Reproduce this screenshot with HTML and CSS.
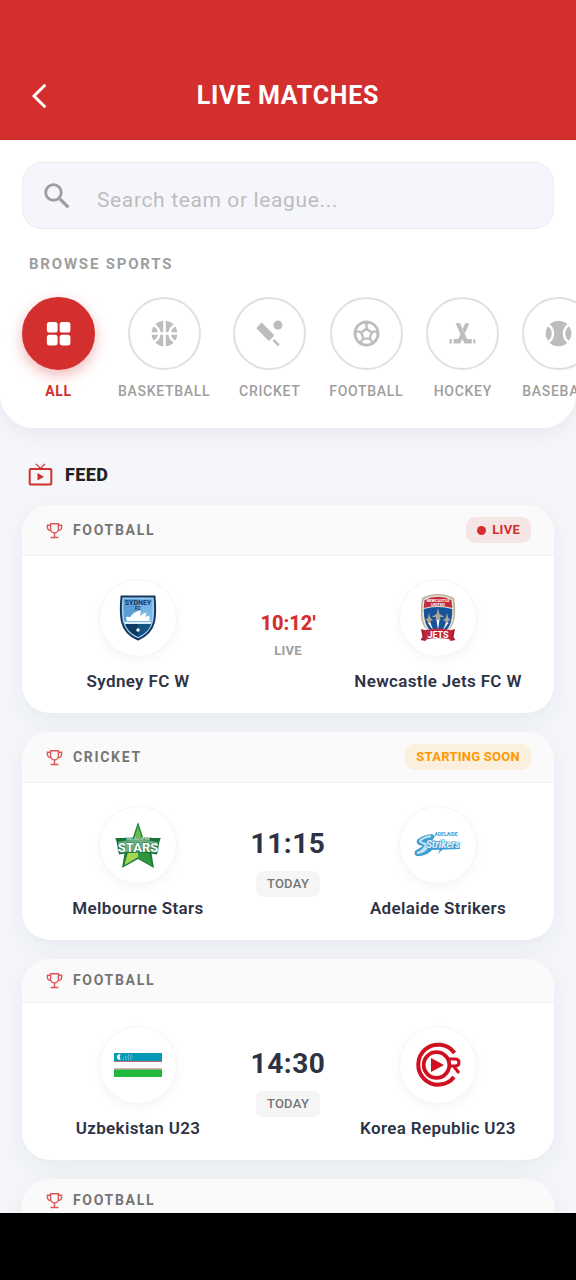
FILE: index.html
```html
<!DOCTYPE html>
<html lang="en">
<head>
<meta charset="UTF-8">
<meta name="viewport" content="width=device-width, initial-scale=1.0">
<title>Live Matches</title>
<link rel="stylesheet" href="styles.css">
</head>
<body>

<svg class="sprite" aria-hidden="true">
  <symbol id="trophy" viewBox="0 0 24 24">
    <path d="M6.500 2.500h11v7.500a5.500 5.500 0 0 1-11 0zM6.500 4.500H2v3.200a4.500 4.500 0 0 0 4.800 4.300M17.500 4.500H22v3.200a4.500 4.500 0 0 1-4.800 4.300M12 15.500v6M6.500 21.800h11" fill="none" stroke="currentColor" stroke-width="2"/>
  </symbol>
</svg>

<header class="app-bar">
  <button class="back" aria-label="Back">
    <svg viewBox="0 0 24 24"><path d="M16 3.500 7.500 12l8.500 8.500" fill="none" stroke="currentColor" stroke-width="2.200"/></svg>
  </button>
  <h1>LIVE MATCHES</h1>
</header>

<section class="panel">
  <div class="search">
    <label for="search" aria-label="Search">
      <svg viewBox="0 0 24 24"><circle cx="9.500" cy="9.500" r="5.500" fill="none" stroke="currentColor" stroke-width="2"/><path d="m14 14 6 6" stroke="currentColor" stroke-width="2.300"/></svg>
    </label>
    <input type="text" id="search" placeholder="Search team or league...">
  </div>

  <h2 class="panel-title">BROWSE SPORTS</h2>

  <nav class="sports">
    <button class="sport active">
      <span class="sport-icon">
        <svg viewBox="0 0 24 24" fill="currentColor"><rect x="3" y="3" width="8.300" height="8.300" rx="2"/><rect x="12.900" y="3" width="8.300" height="8.300" rx="2"/><rect x="3" y="12.900" width="8.300" height="8.300" rx="2"/><rect x="12.900" y="12.900" width="8.300" height="8.300" rx="2"/></svg>
      </span>
      ALL
    </button>
    <button class="sport">
      <span class="sport-icon">
        <svg viewBox="0 0 24 24" fill="currentColor"><path d="M17.090 11h4.860c-.16-1.610-.71-3.110-1.540-4.400-1.730.83-2.990 2.450-3.320 4.400zM6.910 11C6.580 9.050 5.320 7.430 3.590 6.600 2.760 7.890 2.210 9.390 2.050 11h4.860zM15.070 11c.32-2.590 1.880-4.790 4.060-6-1.600-1.630-3.740-2.710-6.130-2.950V11h2.070zM8.930 11H11V2.050C8.610 2.290 6.460 3.370 4.870 5c2.180 1.210 3.740 3.410 4.060 6zM15.070 13H13v8.950c2.390-.24 4.540-1.320 6.130-2.950-2.180-1.210-3.740-3.410-4.060-6zM3.590 17.400c1.730-.83 2.990-2.450 3.320-4.400H2.050c.16 1.610.71 3.110 1.540 4.400zM17.090 13c.33 1.950 1.590 3.570 3.320 4.400.83-1.290 1.380-2.790 1.540-4.400h-4.860zM8.930 13c-.32 2.590-1.880 4.790-4.060 6 1.600 1.630 3.740 2.710 6.130 2.950V13H8.930z"/></svg>
      </span>
      BASKETBALL
    </button>
    <button class="sport">
      <span class="sport-icon">
        <svg viewBox="0 0 24 24" fill="currentColor"><path d="M5.200 4.100q.7-.7 1.400 0l8.600 8.700q.7.7 0 1.400l-3 3q-.7.7-1.400 0L2.300 8.500q-.7-.7 0-1.400z"/><path d="m14.300 17.700 1.400-1.400 4.200 4.200-1.400 1.400z"/><circle cx="18.500" cy="5.500" r="3.500"/></svg>
      </span>
      CRICKET
    </button>
    <button class="sport">
      <span class="sport-icon">
        <svg viewBox="0 0 24 24" fill="none" stroke="currentColor" stroke-width="1.800"><circle cx="12" cy="12" r="9" stroke-width="2"/><path d="m12 8.300 4 2.900-1.500 4.700h-5L8 11.200z" stroke-linejoin="round"/><path d="M12 8.300V5.500M16 11.200l3-1M14.500 15.900l1.800 2.600M9.500 15.900l-1.800 2.600M8 11.200l-3-1"/><path d="M9 3.500 12 6l3-2.500zM20.800 8l-2.200 2.500 2 3.500zM3.200 8l2.200 2.500-2 3.500zM18.300 17.500l-2.800.5-.5 2.500zM5.700 17.500l2.800.5.5 2.500z" fill="currentColor" stroke="none"/></svg>
      </span>
      FOOTBALL
    </button>
    <button class="sport">
      <span class="sport-icon">
        <svg viewBox="0 0 24 24" fill="currentColor"><path d="M6.700 4H10l5.600 12.200h3.600v3.600h-5q-.7 0-1-.7z"/><path d="M17.300 4H14l-1.800 4.500 1.600 3.500zM10.600 12.200l1.500 3.500-1.600 3.500q-.3.600-1 .6H5.100v-3.600h3.600z"/><path d="M2 17.200q0-1 1-1h.7v3.600H2zM22 17.200q0-1-1-1h-.7v3.600H22z"/></svg>
      </span>
      HOCKEY
    </button>
    <button class="sport">
      <span class="sport-icon">
        <svg viewBox="0 0 24 24" fill="currentColor"><path d="M3.800 6.300A10 10 0 0 0 3.800 17.700 7 7 0 0 0 3.800 6.300zM20.200 6.300a10 10 0 0 1 0 11.400 7 7 0 0 1 0-11.400zM5.100 4.800a10 10 0 0 1 13.800 0 9 9 0 0 0 0 14.400 10 10 0 0 1-13.800 0 9 9 0 0 0 0-14.400z"/></svg>
      </span>
      BASEBALL
    </button>
  </nav>
</section>

<main class="feed">
  <h2 class="feed-title">
    <svg viewBox="0 0 24 24" fill="none" stroke="currentColor"><rect x="1.200" y="6" width="21.600" height="15.600" rx="1" stroke-width="2"/><path d="M7.500.8 12 5.500 16.500.8" stroke-width="1.200"/><path d="M9 10v7.500l6.500-3.750z" fill="currentColor" stroke="none"/></svg>
    FEED
  </h2>

  <article class="card">
    <div class="card-head">
      <svg class="trophy"><use href="#trophy"/></svg>
      <h3>FOOTBALL</h3>
      <span class="badge live"><i class="dot"></i>LIVE</span>
    </div>
    <div class="card-body">
      <div class="team">
        <span class="crest">
          <svg viewBox="0 0 48 48">
            <defs><linearGradient id="sky" x2="0" y2="1"><stop offset="0" stop-color="#6fb0e2"/><stop offset="1" stop-color="#8cc3ec"/></linearGradient></defs>
            <path d="M7.500 2.500h33q1.500 16-.5 25.500Q37 40 24 45.500 11 40 8 28 6 18 7.500 2.500z" fill="#a5d2f3" stroke="#17375e" stroke-width="2"/>
            <path d="M9.800 4.800h28.400q1 14-.7 22.500Q35 38 24 43 13 38 10.500 27.300 8.800 19 9.800 4.800z" fill="url(#sky)"/>
            <path d="M9.900 5H24v22H10.300Q9 15 9.900 5z" fill="#5b9ed5"/>
            <path d="M10.700 29h26.600Q34.500 38.500 24 43 13.500 38.500 10.700 29z" fill="#0d3a63"/>
            <path d="M24 29h13.300Q34.500 38.500 24 43z" fill="#135480"/>
            <path d="M12 23q2-.5 4 .5 3-6 11-7-1 3-.5 6 2-4 6-3.500-1 2-1 4.500 2-2.500 4-1.500v5H13z" fill="#fff"/>
            <path d="M11 28h26v2H11z" fill="#d9ecf8"/>
            <circle cx="24" cy="36" r="1.700" fill="#fff"/>
            <text x="24" y="11" class="logo-text" font-size="7" fill="#17375e">SYDNEY</text>
            <text x="24" y="16" class="logo-text" font-size="5" fill="#17375e">FC</text>
          </svg>
        </span>
        <span class="team-name">Sydney FC W</span>
      </div>
      <div class="score">
        <span class="clock">10:12'</span>
        <span class="state">LIVE</span>
      </div>
      <div class="team">
        <span class="crest">
          <svg viewBox="0 0 48 48">
            <path d="M8 4q8-4 16-4t16 4q1.500 7 1 17-.5 9-6 15H13Q7.500 31 7 22 6.500 12 8 4z" fill="#b9ae96"/>
            <path d="M9.500 5.200Q16 1.500 24 1.500t14.500 3.700q1.500 7 1 17-.5 8-5.500 14H14q-5-6-5.500-14-.5-10 1-17z" fill="#ece7dc"/>
            <path d="M10.500 6Q17 2.800 24 2.800T37.500 6l.8 8q-14-4-28.600 0z" fill="#c32a3d"/>
            <path d="M9.700 15q14-4 28.600 0 0 12-3 17-1 2-3 4H15.700q-6-6-6-21z" fill="#17529b"/>
            <path d="m24 14-1.500 6-5 3h4.500l-.5 3h5l-.5-3h4.500l-5-3zM15 19l-1.200 5-3 2.500h3L13.500 29h3.500l-.5-2.500h3L16.300 24zM33 19l-1.300 5-3.200 2.500h3L31 29h3.500l-.3-2.500h3L34.200 24z" fill="#aaa795"/>
            <path d="M22.500 26h3L24 36zM14 29h2.500l3 8zM32 29h2.500l-6 8z" fill="#fff"/>
            <path d="m7 35 5 1.500 1.500 7-2 3.500-5-1 2-3zM41 35l-5 1.500-1.500 7 2 3.500 5-1-2-3z" fill="#a32134"/>
            <path d="M10 36.500q14-4 28 0l-1 9q-13-3-26 0z" fill="#c32a3d"/>
            <text x="24" y="8" class="logo-text" font-size="4" fill="#fff">NEWCASTLE</text>
            <text x="24" y="12" class="logo-text" font-size="4" fill="#fff">UNITED</text>
            <text x="24" y="44" class="logo-text" font-size="9" fill="#fff">JETS</text>
          </svg>
        </span>
        <span class="team-name">Newcastle Jets FC W</span>
      </div>
    </div>
  </article>

  <article class="card">
    <div class="card-head">
      <svg class="trophy"><use href="#trophy"/></svg>
      <h3>CRICKET</h3>
      <span class="badge soon">STARTING SOON</span>
    </div>
    <div class="card-body">
      <div class="team">
        <span class="crest">
          <svg viewBox="0 0 48 48">
            <path d="m24 1 5.300 16H47l-7.500 12-2 3 2.500 15-16-9-16 9 2.500-15-2-3L1 17h17.700z" fill="#1f7d3d"/>
            <path d="m24 5 4.500 14H44L33 28l4.500 16L24 36l-13.500 8L15 28 4 19h15.500z" fill="#66bd45"/>
            <path d="M24 5v31l-13.500 8L15 28l9-8z" fill="#a6d750"/>
            <path d="M24 36v-8h9.200l4.300 16z" fill="#2f983e"/>
            <path d="M2 18q22-4 44 0l-3 15.500q-19-4-38 0z" fill="#16713a"/>
            <path d="M4 21q20-4.500 40 0l-2 11q-18-3.500-36 0z" fill="#6fae82"/>
            <text x="24" y="18.500" class="logo-text" font-size="4" fill="#cfe8c8">MELBOURNE</text>
            <text x="24" y="31" class="logo-text outlined" font-size="13" fill="#fff" stroke="#16713a">STARS</text>
          </svg>
        </span>
        <span class="team-name">Melbourne Stars</span>
      </div>
      <div class="score">
        <span class="time">11:15</span>
        <span class="day">TODAY</span>
      </div>
      <div class="team">
        <span class="crest">
          <svg viewBox="0 0 48 48">
            <path d="M18 13Q8 14 3 19q-2 5 6 6-5 3-8 5-2 6 5 5 8-1 12-6l28-1-1-6-27-2 3-5z" fill="#3c9dd2"/>
            <path d="M17 15Q8 17 6 20q1 2 6 3-2 7-9 9 7 0 11-7" fill="none" stroke="#c4e3f3" stroke-width="2"/>
            <path d="m27 26-3 7 7-7z" fill="#3c9dd2"/>
            <text x="29" y="27" class="logo-text script outlined" font-size="10" fill="#e3f1f8" stroke="#3c9dd2">Strikers</text>
            <text x="32" y="15" class="logo-text" font-size="5" fill="#36a0d5">ADELAIDE</text>
          </svg>
        </span>
        <span class="team-name">Adelaide Strikers</span>
      </div>
    </div>
  </article>

  <article class="card">
    <div class="card-head">
      <svg class="trophy"><use href="#trophy"/></svg>
      <h3>FOOTBALL</h3>
    </div>
    <div class="card-body">
      <div class="team">
        <span class="crest">
          <svg viewBox="0 0 48 48">
            <path d="M0 12h48v8H0z" fill="#0899b7"/>
            <path d="M0 20h48v1H0zM0 27.500h48v1H0z" fill="#bd6a70"/>
            <path d="M0 28.500h48V36H0z" fill="#20b93e"/>
            <path d="M7 13.500a2.800 2.800 0 1 0 0 5 3 3 0 0 1 0-5z" fill="#fff"/>
            <path d="M9 18h10M11 16h8M14 14h5" stroke="#b9e3ec" stroke-width="1" stroke-dasharray="1 1.500"/>
          </svg>
        </span>
        <span class="team-name">Uzbekistan U23</span>
      </div>
      <div class="score">
        <span class="time">14:30</span>
        <span class="day">TODAY</span>
      </div>
      <div class="team">
        <span class="crest">
          <svg viewBox="0 0 48 48" fill="none" stroke="#cf1020">
            <path d="M40.500 12A20 20 0 1 0 40 36" stroke-width="4"/>
            <circle cx="22.500" cy="24" r="12.800" stroke-width="3.800"/>
            <path d="M33 18h8q4 0 4 3.500T41 25h-6M39.500 25l5.500 7" stroke-width="3"/>
            <path d="M17 17v14l13-7z" fill="#cf1020" stroke="none"/>
          </svg>
        </span>
        <span class="team-name">Korea Republic U23</span>
      </div>
    </div>
  </article>

  <article class="card">
    <div class="card-head">
      <svg class="trophy"><use href="#trophy"/></svg>
      <h3>FOOTBALL</h3>
    </div>
    <div class="card-body"></div>
  </article>
</main>

<footer class="system-bar"></footer>

</body>
</html>
```
FILE: styles.css
```css
* {
  box-sizing: border-box;
}
body {
  display: flex;
  flex-direction: column;
  height: 100vh;
  margin: 0;
  overflow: hidden;
  background: #f4f6fa;
  font-family: Roboto, "Liberation Sans", sans-serif;
  color: #2d3345;
}
h1, h2, h3 {
  margin: 0;
}
button {
  padding: 0;
  border: none;
  background: none;
  font-family: inherit;
  cursor: pointer;
}
svg {
  display: block;
}
.sprite {
  position: absolute;
  width: 0;
  height: 0;
}

/* header */
.app-bar {
  flex: none;
  display: grid;
  grid-template-columns: 32px 1fr 32px;
  align-items: center;
  padding: 76px 24px 24px;
  background: #d32f2f;
  color: #fff;
}
.app-bar h1 {
  font-size: 25px;
  line-height: 40px;
  font-weight: 700;
  letter-spacing: 0.03em;
  text-align: center;
}
.back {
  color: inherit;
}
.back svg {
  width: 32px;
  height: 32px;
}

/* search and sports */
.panel {
  flex: none;
  padding: 22px 0 27px;
  background: #fff;
  border-radius: 0 0 34px 34px;
  box-shadow: 0 6px 20px rgba(30, 40, 60, 0.06);
  overflow: hidden;
}
.search {
  display: flex;
  align-items: center;
  height: 67px;
  margin: 0 22px;
  padding: 0 17px;
  background: #f5f6fb;
  border: 1px solid #ececec;
  border-radius: 20px;
}
.search label {
  color: #9e9e9e;
}
.search svg {
  width: 34px;
  height: 34px;
}
.search input {
  flex: 1;
  min-width: 0;
  height: 100%;
  padding: 9px 0 0 23px;
  border: none;
  outline: none;
  background: none;
  font-family: inherit;
  font-size: 21px;
  letter-spacing: 0.03em;
  color: #2d3345;
}
.search input::placeholder {
  color: #bdbdbd;
  opacity: 1;
}
.panel-title {
  margin: 25px 29px 23px;
  font-size: 15px;
  line-height: 20px;
  font-weight: 700;
  letter-spacing: 0.12em;
  color: #9e9e9e;
}
.sports {
  display: flex;
  gap: 23px;
  padding: 0 22px;
}
.sport {
  flex: none;
  display: flex;
  flex-direction: column;
  align-items: center;
  gap: 11px;
  font-size: 14px;
  line-height: 20px;
  font-weight: 500;
  letter-spacing: 0.05em;
  color: #9e9e9e;
}
.sport-icon {
  display: flex;
  align-items: center;
  justify-content: center;
  width: 73px;
  height: 73px;
  border: 2px solid #e0e0e0;
  border-radius: 50%;
  color: #bdbdbd;
}
.sport-icon svg {
  width: 31px;
  height: 31px;
}
.sport.active {
  font-weight: 700;
  color: #d32f2f;
}
.active .sport-icon {
  background: #d32f2f;
  border-color: #d32f2f;
  box-shadow: 0 5px 14px rgba(211, 47, 47, 0.35);
  color: #fff;
}

/* feed */
.feed {
  flex: 1;
  min-height: 0;
  padding: 37px 22px 0;
  overflow: hidden;
}
.feed-title {
  display: flex;
  align-items: center;
  gap: 12px;
  margin: 0 6px 20px;
  font-size: 18px;
  line-height: 20px;
  font-weight: 800;
  letter-spacing: 0.02em;
  color: #212121;
}
.feed-title svg {
  width: 25px;
  height: 24px;
  margin: -2px 0;
  color: #d32f2f;
}
.card {
  margin-bottom: 19px;
  background: #fff;
  border-radius: 28px;
  box-shadow: 0 8px 24px rgba(30, 50, 70, 0.06);
  overflow: hidden;
}
.card-head {
  display: flex;
  align-items: center;
  padding: 12px 23px 12px 24px;
  background: #fafafa;
  border-bottom: 1px solid #f2f2f2;
}
.trophy {
  width: 17px;
  height: 17px;
  color: #d95757;
}
.card-head h3 {
  margin-left: 10px;
  font-size: 14px;
  line-height: 19px;
  font-weight: 700;
  letter-spacing: 0.12em;
  color: #757575;
}
.badge {
  display: flex;
  align-items: center;
  gap: 6px;
  margin-left: auto;
  padding: 0 11px;
  border-radius: 9px;
  font-size: 13px;
  line-height: 26px;
  font-weight: 700;
  letter-spacing: 0.02em;
}
.live {
  background: #f6e5e5;
  color: #d32f2f;
}
.soon {
  background: #fbf0de;
  color: #ff9800;
}
.dot {
  width: 9px;
  height: 9px;
  border-radius: 50%;
  background: #d32f2f;
}
.card-body {
  display: grid;
  grid-template-columns: 1fr 114px 1fr;
  align-items: center;
  padding: 23px 23px 22px;
}
.team {
  display: flex;
  flex-direction: column;
  align-items: center;
  gap: 14px;
}
.crest {
  display: flex;
  align-items: center;
  justify-content: center;
  width: 78px;
  height: 78px;
  background: #fff;
  border: 1px solid #f5f5f5;
  border-radius: 50%;
  box-shadow: 0 4px 12px rgba(0, 0, 0, 0.04);
}
.crest svg {
  width: 48px;
  height: 48px;
  overflow: visible;
}
.logo-text {
  font-family: Roboto, "Liberation Sans", sans-serif;
  font-weight: 700;
  text-anchor: middle;
}
.script {
  font-style: italic;
}
.outlined {
  stroke-width: 1;
  paint-order: stroke;
}
.team-name {
  font-size: 17px;
  line-height: 20px;
  font-weight: 600;
  letter-spacing: 0.02em;
  white-space: nowrap;
}
.score {
  display: flex;
  flex-direction: column;
  align-items: center;
}
.clock {
  margin-bottom: 8px;
  font-size: 20px;
  line-height: 24px;
  font-weight: 800;
  color: #d32f2f;
}
.state {
  font-size: 13px;
  line-height: 16px;
  font-weight: 700;
  letter-spacing: 0.02em;
  color: #9e9e9e;
}
.time {
  margin-bottom: 10px;
  font-size: 28px;
  line-height: 34px;
  font-weight: 700;
  letter-spacing: 0.02em;
}
.day {
  padding: 0 11px;
  background: #f5f5f5;
  border-radius: 7px;
  font-size: 13px;
  line-height: 26px;
  font-weight: 500;
  letter-spacing: 0.02em;
  color: #757575;
}

.system-bar {
  flex: none;
  height: 67px;
  background: #000;
}
```
